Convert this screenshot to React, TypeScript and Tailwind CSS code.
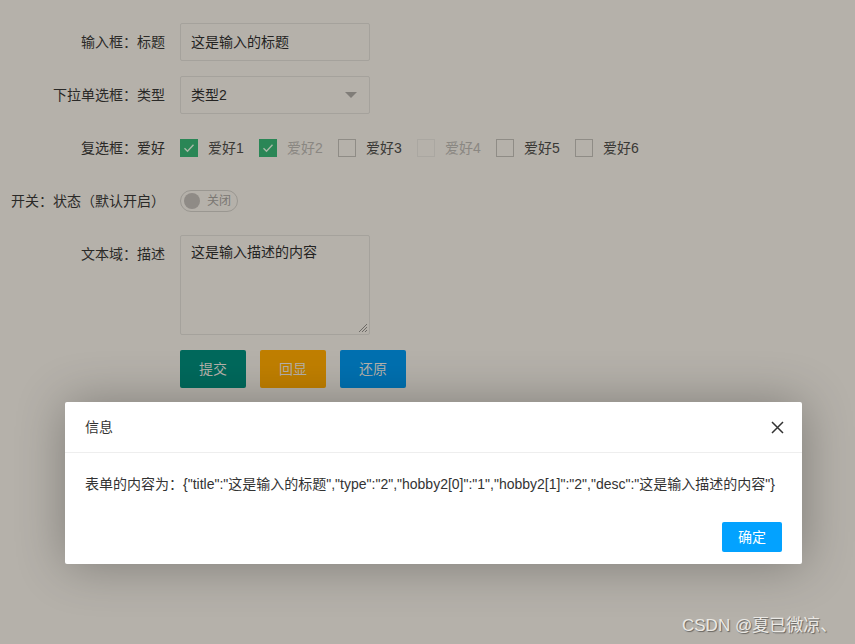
import React from 'react';

const font = { fontFamily: '"Liberation Sans", "Noto Sans CJK SC", sans-serif' };

const hobbies = [
    { label: '爱好1', checked: true, disabled: false },
    { label: '爱好2', checked: true, disabled: true },
    { label: '爱好3', checked: false, disabled: false },
    { label: '爱好4', checked: false, disabled: true },
    { label: '爱好5', checked: false, disabled: false },
    { label: '爱好6', checked: false, disabled: false },
];

function Label({ children, top = false }: { children: React.ReactNode; top?: boolean }) {
    return (
        <div className={`w-[180px] shrink-0 pr-[15px] text-right text-[14px] leading-[20px] text-[#2a2927] whitespace-nowrap ${top ? 'pt-[9px]' : ''}`}>
            {children}
        </div>
    );
}

export default function App() {
    return (
        <div style={font} className="relative w-full h-[644px] overflow-hidden bg-[#b5b1aa]">
            {/* form under the shade */}
            <div className="flex flex-col gap-[15px] pt-[23px]">
                <div className="flex items-center h-[38px]">
                    <Label>输入框：标题</Label>
                    <div className="w-[190px] h-[38px] border border-[#a5a29c] rounded-[2px] px-[10px] flex items-center text-[14px] text-[#242322]">
                        这是输入的标题
                    </div>
                </div>

                <div className="flex items-center h-[38px]">
                    <Label>下拉单选框：类型</Label>
                    <div className="w-[190px] h-[38px] border border-[#a5a29c] rounded-[2px] pl-[10px] pr-[12px] flex items-center justify-between text-[14px] text-[#242322]">
                        <span>类型2</span>
                        <svg width="12" height="6" viewBox="0 0 12 6"><path d="M0 0h12L6 6z" fill="#807d78" /></svg>
                    </div>
                </div>

                <div className="flex items-center h-[38px]">
                    <Label>复选框：爱好</Label>
                    <div className="flex items-center">
                        {hobbies.map((h) => (
                            <div key={h.label} className="w-[79px] flex items-center gap-[10px]">
                                {h.checked ? (
                                    <span className="w-[18px] h-[18px] bg-[#2a8656] flex items-center justify-center">
                                        <svg width="12" height="10" viewBox="0 0 12 10"><path d="M1.5 5.2l3 3 6-6.5" fill="none" stroke="#a9b9a8" strokeWidth="1.4" /></svg>
                                    </span>
                                ) : (
                                    <span className={`w-[18px] h-[18px] border ${h.disabled ? 'border-[#aaa7a1]' : 'border-[#8f8c86]'}`} />
                                )}
                                <span className={`text-[14px] ${h.disabled ? 'text-[#8a8782]' : 'text-[#3a3936]'}`}>{h.label}</span>
                            </div>
                        ))}
                    </div>
                </div>

                <div className="flex items-center h-[38px]">
                    <Label>开关：状态（默认开启）</Label>
                    <div className="w-[58px] h-[22px] rounded-full border border-[#9a9791] flex items-center pl-[3px] gap-[7px]">
                        <span className="w-[16px] h-[16px] rounded-full bg-[#8f8b86]" />
                        <span className="text-[12px] text-[#7a7772]">关闭</span>
                    </div>
                </div>

                <div className="flex items-start">
                    <Label top>文本域：描述</Label>
                    <div className="relative w-[190px] h-[100px] border border-[#a5a29c] rounded-[2px] px-[10px] py-[6px] text-[14px] leading-[20px] text-[#242322]">
                        这是输入描述的内容
                        <svg className="absolute right-[1px] bottom-[1px]" width="12" height="12" viewBox="0 0 12 12">
                            <path d="M11 3L3 11M11 6L6 11M11 9L9 11" stroke="#6d6a66" strokeWidth="1" />
                        </svg>
                    </div>
                </div>

                <div className="flex items-center pl-[180px] gap-[14px]">
                    <div className="w-[66px] h-[38px] rounded-[2px] bg-[#00695c] flex items-center justify-center text-[14px] text-[#b5b1aa]">提交</div>
                    <div className="w-[66px] h-[38px] rounded-[2px] bg-[#c07f00] flex items-center justify-center text-[14px] text-[#b5b1aa]">回显</div>
                    <div className="w-[66px] h-[38px] rounded-[2px] bg-[#0070b0] flex items-center justify-center text-[14px] text-[#b5b1aa]">还原</div>
                </div>
            </div>

            {/* dialog */}
            <div className="absolute left-[65px] top-[402px] w-[737px] bg-white rounded-[2px] shadow-[1px_1px_50px_rgba(0,0,0,0.3)]">
                <div className="h-[51px] flex items-center justify-between pl-[20px] pr-[18px] border-b border-[#eeeeee]">
                    <span className="text-[14px] text-[#333]">信息</span>
                    <svg width="13" height="13" viewBox="0 0 13 13"><path d="M1 1l11 11M12 1L1 12" stroke="#333" strokeWidth="1.5" /></svg>
                </div>
                <div className="p-[20px] text-[14px] leading-[22px] text-[#333] whitespace-nowrap">
                    表单的内容为：{'{"title":"这是输入的标题","type":"2","hobby2[0]":"1","hobby2[1]":"2","desc":"这是输入描述的内容"}'}
                </div>
                <div className="flex justify-end pt-[7px] pb-[12px] pr-[20px]">
                    <div className="w-[60px] h-[30px] bg-[#03a2ff] rounded-[2px] flex items-center justify-center text-[14px] text-white">确定</div>
                </div>
            </div>

            {/* watermark */}
            <div className="absolute left-[682px] top-[613px] text-[17px] text-[#ebe9e5] [text-shadow:1px_1px_1px_rgba(0,0,0,0.45)] whitespace-nowrap">
                CSDN @夏已微凉、
            </div>
        </div>
    );
}
